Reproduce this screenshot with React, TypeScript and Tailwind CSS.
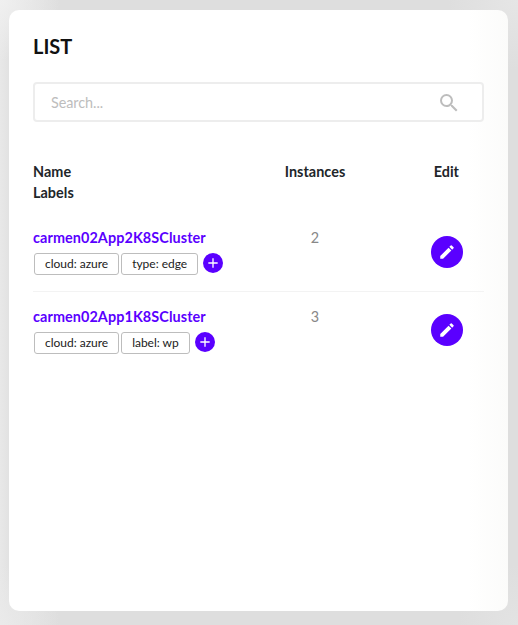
import React from 'react';
import { MdAdd, MdEdit, MdSearch } from 'react-icons/md';

interface Cluster {
  name: string;
  labels: string[];
  instances: number;
}

const clusters: Cluster[] = [
  { name: 'carmen02App2K8SCluster', labels: ['cloud: azure', 'type: edge'], instances: 2 },
  { name: 'carmen02App1K8SCluster', labels: ['cloud: azure', 'label: wp'], instances: 3 },
];

function Label({ text }: { text: string }) {
  return (
    <span className="flex h-[22px] items-center rounded-[3px] border border-[#bdbdbd] bg-white px-[10px] text-[12px] leading-none tracking-[-0.02px] text-[#212121]">
      {text}
    </span>
  );
}

function Row({ cluster }: { cluster: Cluster }) {
  return (
    <div className="group flex h-[79px] border-b border-[#f3f3f3] pt-[14px] last:border-b-0">
      <div className="w-[236px]">
        <a className="block text-[14.4px] leading-[21px] font-bold tracking-[0.09px] text-[#5a00ff]">{cluster.name}</a>
        <div className="mt-[5px] ml-px flex items-start gap-[2px]">
          {cluster.labels.map((l) => (
            <Label key={l} text={l} />
          ))}
          <button className="ml-[3px] flex size-5 items-center justify-center rounded-full bg-[#5a00ff] text-white">
            <MdAdd className="size-4" />
          </button>
        </div>
      </div>
      <div className="w-[92px] text-center text-[14.4px] leading-[21px] text-[#888]">{cluster.instances}</div>
      <div className="flex flex-1 justify-end pr-[21px]">
        <button className="mt-[9px] flex size-8 items-center justify-center rounded-full bg-[#5a00ff] text-white group-last:mt-[8px]">
          <MdEdit className="size-[18px]" />
        </button>
      </div>
    </div>
  );
}

export default function App() {
  return (
    <div className="h-[625px] w-[518px] bg-[radial-gradient(circle_at_top_left,#f0f0f0,transparent_60px),radial-gradient(circle_at_top_right,#e6e6e6,transparent_70px),radial-gradient(circle_at_bottom_left,#eaeaea,transparent_60px),radial-gradient(circle_at_bottom_right,#e3e3e3,transparent_60px),linear-gradient(to_right,#e8e8e8,#e2e2e2_9px,#dedede_60px)] pt-[10px] pl-[9px] font-['Lato',sans-serif]">
      <main className="h-[601px] w-[499px] rounded-[10px] bg-[linear-gradient(to_right,#fff_92%,#fbfbfa)] px-6 pt-[24px]">
        <h1 className="text-[20px] leading-6 font-bold text-[#111]">LIST</h1>
        <div className="mt-[24px] flex h-10 items-center justify-between rounded-[4px] border-2 border-[#ededed] bg-white pr-[21px] pl-4">
          <input
            className="w-72 pt-[2px] text-[14.4px] tracking-[-0.05px] text-[#212121] outline-none placeholder:text-[#bdbdbd]"
            placeholder="Search..."
          />
          <MdSearch className="mt-px size-6 text-[#bdbdbd]" />
        </div>
        <div className="mt-[39px] flex h-[52px] text-[14.4px] leading-[21px] font-bold tracking-[0.04px] text-[#212529]">
          <div className="w-[236px]">
            Name
            <br />
            Labels
          </div>
          <div className="w-[92px] text-center">Instances</div>
          <div className="flex-1 pr-[25px] text-right">Edit</div>
        </div>
        <div>
          {clusters.map((c) => (
            <Row key={c.name} cluster={c} />
          ))}
        </div>
      </main>
    </div>
  );
}
